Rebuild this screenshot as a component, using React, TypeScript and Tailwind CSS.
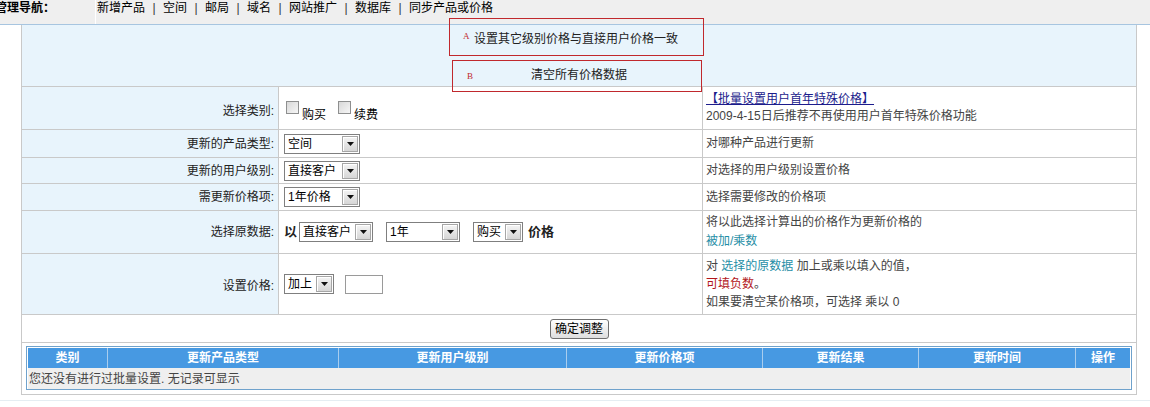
import React from "react";

function Caret() {
  return (
    <svg width="7" height="4" viewBox="0 0 7 4" className="block">
      <path d="M0 0h7L3.5 4z" fill="#111" />
    </svg>
  );
}

function Select({ label, className }: { label: string; className: string }) {
  return (
    <div
      className={`flex h-[20px] shrink-0 items-center border border-[#7f7f7f] bg-white ${className}`}
    >
      <span className="flex-1 truncate pl-[3px] text-[12px] leading-[14px] text-black">
        {label}
      </span>
      <span className="mr-px flex h-[16px] w-[16px] items-center justify-center border border-[#a6a6a6] bg-[linear-gradient(#f4f4f4,#d6d6d6)] shadow-[inset_1px_1px_0_#ffffff]">
        <Caret />
      </span>
    </div>
  );
}

function Check({ text }: { text: string }) {
  return (
    <div className="flex items-start">
      <span className="mt-0 h-[13px] w-[13px] border border-[#8e8f8f] bg-[linear-gradient(135deg,#d8d8d8,#f6f6f6)]" />
      <span className="ml-[3px] mt-[8px] text-[12px] leading-[12px] text-black">{text}</span>
    </div>
  );
}

function Row({
  h,
  label,
  labelPad = "",
  mid,
  right,
}: {
  h: string;
  label: string;
  labelPad?: string;
  mid: React.ReactNode;
  right: React.ReactNode;
}) {
  return (
    <div className={`flex border-b border-[#c9c9c9] ${h}`}>
      <div
        className={`flex w-[257px] shrink-0 items-center justify-end border-r border-[#c9c9c9] bg-[#e8f4fc] pr-[4px] text-[12px] leading-[14px] text-[#222] ${labelPad}`}
      >
        {label}
      </div>
      <div className="flex w-[424px] shrink-0 items-center border-r border-[#c9c9c9] pl-[5px]">
        {mid}
      </div>
      <div className="flex flex-1 flex-col justify-center pl-[3px] text-[12px] text-[#444]">
        {right}
      </div>
    </div>
  );
}

const navLinks = ["新增产品", "空间", "邮局", "域名", "网站推广", "数据库", "同步产品或价格"];

const historyCols: { name: string; w: string }[] = [
  { name: "类别", w: "w-[80px]" },
  { name: "更新产品类型", w: "w-[231px]" },
  { name: "更新用户级别", w: "w-[228px]" },
  { name: "更新价格项", w: "w-[196px]" },
  { name: "更新结果", w: "w-[156px]" },
  { name: "更新时间", w: "w-[157px]" },
];

export default function App() {
  return (
    <div className="relative h-[407px] w-[1150px] overflow-hidden bg-white font-['Liberation_Sans','Noto_Sans_CJK_SC',sans-serif] text-[12px]">
      {/* top navigation */}
      <div className="flex h-[25px] border-b border-[#a7c5e0] bg-[#efefef]">
        <div className="flex w-[96px] shrink-0 border-r border-white">
          <span className="ml-[-5px] mt-px text-[12px] font-bold leading-[14px] text-black">
            管理导航：
          </span>
        </div>
        <div className="ml-[1px] mt-px flex text-[12px] leading-[14px] text-black">
          {navLinks.map((n, i) => (
            <React.Fragment key={n}>
              {i > 0 && <span className="w-[18px] text-center text-[#333]">|</span>}
              <span>{n}</span>
            </React.Fragment>
          ))}
        </div>
      </div>

      {/* settings table */}
      <div className="ml-[21px] w-[1116px] border-x border-b border-[#c9c9c9]">
        <div className="flex h-[62px] flex-col items-center border-b border-[#c9c9c9] bg-[#e8f4fc] pt-[7px] text-[12px] leading-[14px] text-[#222]">
          <span className="pr-[6px]">设置其它级别价格与直接用户价格一致</span>
          <span className="mt-[22px]">清空所有价格数据</span>
        </div>

        <Row
          h="h-[43px]"
          label="选择类别:"
          labelPad="pt-[5px]"
          mid={
            <div className="flex gap-[12px] self-start pl-[2px] pt-[14px]">
              <Check text="购买" />
              <Check text="续费" />
            </div>
          }
          right={
            <div className="leading-[17px]">
              <div>
                <span className="text-[#1c1c8c] underline">【批量设置用户首年特殊价格】</span>
              </div>
              <div>2009-4-15日后推荐不再使用用户首年特殊价格功能</div>
            </div>
          }
        />

        <Row
          h="h-[28px]"
          label="更新的产品类型:"
          mid={<Select label="空间" className="w-[76px]" />}
          right={<div className="leading-[17px]">对哪种产品进行更新</div>}
        />

        <Row
          h="h-[26px]"
          label="更新的用户级别:"
          mid={<Select label="直接客户" className="w-[76px]" />}
          right={<div className="leading-[17px]">对选择的用户级别设置价格</div>}
        />

        <Row
          h="h-[27px]"
          label="需更新价格项:"
          mid={<Select label="1年价格" className="w-[76px]" />}
          right={<div className="leading-[17px]">选择需要修改的价格项</div>}
        />

        <Row
          h="h-[43px]"
          label="选择原数据:"
          mid={
            <div className="flex items-center">
              <span className="mr-[2px] text-[13px] font-bold leading-[14px] text-[#222]">以</span>
              <Select label="直接客户" className="w-[74px]" />
              <Select label="1年" className="ml-[13px] w-[74px]" />
              <Select label="购买" className="ml-[13px] w-[50px]" />
              <span className="ml-[5px] text-[13px] font-bold leading-[14px] text-[#222]">价格</span>
            </div>
          }
          right={
            <div className="leading-[19px]">
              <div>将以此选择计算出的价格作为更新价格的</div>
              <div className="text-[#1f8ea6]">被加/乘数</div>
            </div>
          }
        />

        <Row
          h="h-[61px]"
          label="设置价格:"
          labelPad="pt-[3px]"
          mid={
            <div className="flex items-center">
              <Select label="加上" className="w-[50px]" />
              <span className="ml-[11px] h-[19px] w-[38px] border border-[#9a9a9a] bg-white" />
            </div>
          }
          right={
            <div className="leading-[18px]">
              <div>
                对 <span className="text-[#1f8ea6]">选择的原数据</span> 加上或乘以填入的值，
              </div>
              <div>
                <span className="text-[#b3161b]">可填负数</span>。
              </div>
              <div>如果要清空某价格项，可选择 乘以 0</div>
            </div>
          }
        />

        {/* submit */}
        <div className="flex h-[28px] items-center justify-center border-b border-[#c9c9c9]">
          <button className="h-[20px] w-[59px] rounded-[3px] border border-[#6f6f6f] bg-[linear-gradient(#ffffff,#dedede)] text-[12px] leading-[14px] text-black">
            确定调整
          </button>
        </div>

        {/* history */}
        <div className="h-[51px] px-[4px] pt-[3px]">
          <div className="h-[44px] border border-[#6fa2cc] p-px">
            <div className="flex h-[20px] bg-[#4799e2] text-[12px] font-bold leading-[20px] text-white">
              {historyCols.map((c) => (
                <div key={c.name} className={`${c.w} shrink-0 border-r border-[#a9cdee] text-center`}>
                  {c.name}
                </div>
              ))}
              <div className="flex-1 text-center">操作</div>
            </div>
            <div className="flex h-[21px] items-center bg-[#efefef] pl-px text-[12px] leading-[14px] text-[#444]">
              您还没有进行过批量设置. 无记录可显示
            </div>
          </div>
        </div>
      </div>

      <div className="mt-[5px] border-t border-[#e5edf2]" />

      {/* red callout frames */}
      <div className="absolute left-[449px] top-[18px] h-[38px] w-[255px] border border-[#c0282d]">
        <span className="absolute left-[13px] top-[13px] font-['Liberation_Serif',serif] text-[9px] leading-[9px] text-[#c0282d]">
          A
        </span>
      </div>
      <div className="absolute left-[452px] top-[60px] h-[32px] w-[250px] border border-[#c0282d]">
        <span className="absolute left-[14px] top-[11px] font-['Liberation_Serif',serif] text-[9px] leading-[9px] text-[#c0282d]">
          B
        </span>
      </div>
    </div>
  );
}
